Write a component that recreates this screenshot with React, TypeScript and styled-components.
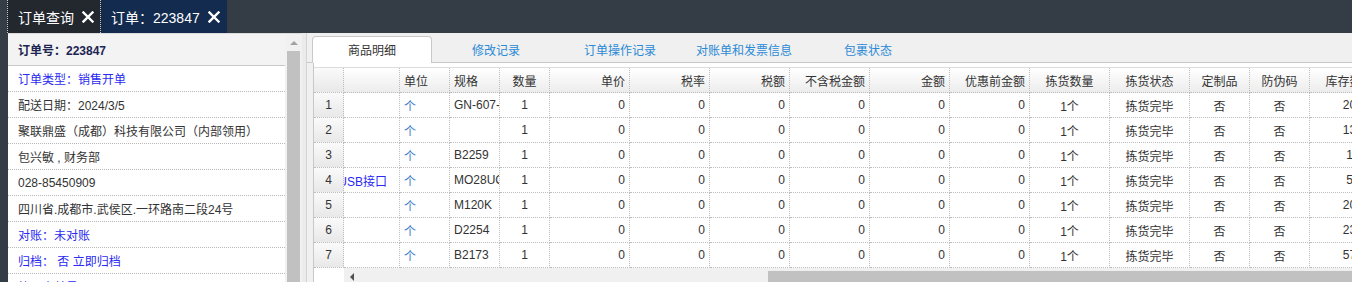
import React from "react";
import styled, { createGlobalStyle } from "styled-components";

const GlobalStyle = createGlobalStyle`
  html, body { margin: 0; padding: 0; }
  body {
    background: #343d46;
    font-family: "Liberation Sans", Arial, "Noto Sans CJK SC", sans-serif;
    font-size: 12px;
    color: #333;
    overflow: hidden;
  }
  * { box-sizing: border-box; }
`;

const Root = styled.div`
  width: 1352px;
  height: 282px;
  display: flex;
  flex-direction: column;
  overflow: hidden;
  background: #343d46;
`;

const TopBar = styled.div`
  height: 33px;
  flex-shrink: 0;
  display: flex;
  padding-left: 7px;
  background: #343d46;
`;

const TopTab = styled.div<{ $bg: string; $dotted?: boolean }>`
  height: 33px;
  display: flex;
  align-items: center;
  gap: 8px;
  padding: 0 7px 0 10px;
  background: ${(p) => p.$bg};
  color: #fff;
  font-size: 14px;
  white-space: nowrap;
  border-left: ${(p) => (p.$dotted ? "1px dotted rgba(255,255,255,0.75)" : "none")};
  border-right: ${(p) => (p.$dotted ? "1px dotted rgba(255,255,255,0.75)" : "none")};
  padding-right: ${(p) => (p.$dotted ? "6px" : "7px")};
`;

const CloseIcon = () => (
  <svg width="12" height="12" viewBox="0 0 12 12">
    <path d="M1.5 1.5 L10.5 10.5 M10.5 1.5 L1.5 10.5" stroke="#fff" strokeWidth="2.4" strokeLinecap="square" />
  </svg>
);

const Main = styled.div`
  flex: 1;
  min-height: 0;
  display: flex;
  padding-left: 8px;
`;

const LeftPanel = styled.div`
  width: 294px;
  flex-shrink: 0;
  display: flex;
  background: #fff;
  border-top: 1px solid #dcdcdc;
`;

const InfoList = styled.div`
  width: 277px;
  display: flex;
  flex-direction: column;
`;

const InfoHeader = styled.div`
  height: 32px;
  flex-shrink: 0;
  display: flex;
  align-items: center;
  padding-left: 10px;
  background: #f3f3f3;
  border-bottom: 1px solid #c8c8c8;
  font-weight: bold;
  color: #1c2452;
`;

const InfoRow = styled.div<{ $blue?: boolean }>`
  height: 26px;
  flex-shrink: 0;
  display: flex;
  align-items: center;
  padding-left: 10px;
  border-bottom: 1px dotted #b8b8b8;
  color: ${(p) => (p.$blue ? "#2a2af2" : "#333")};
  white-space: nowrap;
`;

const VScroll = styled.div`
  width: 17px;
  display: flex;
  flex-direction: column;
  align-items: center;
  background: #f1f1f1;
`;

const UpArrow = styled.div`
  width: 0;
  height: 0;
  margin-top: 7px;
  border-left: 4px solid transparent;
  border-right: 4px solid transparent;
  border-bottom: 4px solid #a3a3a3;
`;

const VThumb = styled.div`
  width: 13px;
  margin-top: 6px;
  flex: 1;
  background: #c1c1c1;
`;

const Splitter = styled.div`
  width: 5px;
  flex-shrink: 0;
  background: #ebebeb;
  border-right: 1px solid #d4d4d4;
`;

const RightPanel = styled.div`
  flex: 1;
  min-width: 0;
  display: flex;
  flex-direction: column;
  background: #f0f0f0;
  overflow: hidden;
`;

const TabStrip = styled.div`
  height: 30px;
  flex-shrink: 0;
  display: flex;
  align-items: flex-start;
  gap: 4px;
  padding: 3px 0 0 5px;
  border-bottom: 1px solid #c8c8c8;
`;

const PaneTab = styled.div<{ $active?: boolean }>`
  width: 120px;
  height: 27px;
  display: flex;
  align-items: center;
  justify-content: center;
  padding-bottom: 1px;
  border: 1px solid ${(p) => (p.$active ? "#c8c8c8" : "transparent")};
  border-bottom: none;
  border-radius: 4px 4px 0 0;
  background: ${(p) => (p.$active ? "#fff" : "transparent")};
  color: ${(p) => (p.$active ? "#333" : "#2b8ad6")};
  position: relative;
  z-index: 1;
`;

const Content = styled.div`
  flex: 1;
  min-height: 0;
  margin-left: 6px;
  padding-top: 4px;
  background: #fff;
  border-left: 1px solid #c8c8c8;
  display: flex;
  flex-direction: column;
  overflow: hidden;
`;

const Grid = styled.div`
  border-top: 1px solid #dcdcdc;
  display: flex;
  flex-direction: column;
`;

const Row = styled.div<{ $head?: boolean }>`
  height: 25px;
  display: flex;
  flex-shrink: 0;
  background: ${(p) => (p.$head ? "linear-gradient(#ffffff, #ececec)" : "#fff")};
`;

type Align = "left" | "center" | "right";

const Cell = styled.div<{ $w: number; $align: Align; $num?: boolean; $color?: string; $pr?: number }>`
  width: ${(p) => p.$w}px;
  flex-shrink: 0;
  height: 25px;
  display: flex;
  align-items: center;
  justify-content: ${(p) =>
    p.$align === "left" ? "flex-start" : p.$align === "right" ? "flex-end" : "center"};
  padding: 0 ${(p) => p.$pr ?? 4}px 0 4px;
  border-right: 1px dotted #bdbdbd;
  border-bottom: 1px dotted #bdbdbd;
  white-space: nowrap;
  overflow: hidden;
  color: ${(p) => p.$color ?? "#333"};
  background: ${(p) => (p.$num ? "linear-gradient(#fafafa, #e8e8e8)" : "transparent")};
`;

const HScroll = styled.div`
  height: 17px;
  flex-shrink: 0;
  display: flex;
`;

const HSpacer = styled.div`
  width: 30px;
  flex-shrink: 0;
  background: #fff;
`;

const HTrack = styled.div`
  flex: 1;
  display: flex;
  align-items: center;
  background: #f0f0f0;
  padding-left: 6px;
`;

const LeftArrow = styled.div`
  width: 0;
  height: 0;
  flex-shrink: 0;
  border-top: 4px solid transparent;
  border-bottom: 4px solid transparent;
  border-right: 4px solid #505050;
`;

const HThumb = styled.div`
  flex: 1;
  align-self: stretch;
  margin: 3px 0 0 414px;
  background: #c1c1c1;
`;

const columns: { w: number; label: string; align: Align }[] = [
  { w: 30, label: "", align: "center" },
  { w: 56, label: "", align: "right" },
  { w: 50, label: "单位", align: "left" },
  { w: 50, label: "规格", align: "left" },
  { w: 50, label: "数量", align: "center" },
  { w: 80, label: "单价", align: "right" },
  { w: 80, label: "税率", align: "right" },
  { w: 80, label: "税额", align: "right" },
  { w: 80, label: "不含税金额", align: "right" },
  { w: 80, label: "金额", align: "right" },
  { w: 80, label: "优惠前金额", align: "right" },
  { w: 80, label: "拣货数量", align: "center" },
  { w: 80, label: "拣货状态", align: "center" },
  { w: 60, label: "定制品", align: "center" },
  { w: 60, label: "防伪码", align: "center" },
  { w: 80, label: "库存数量", align: "center" },
];

const rows = [
  { name: "", spec: "GN-607-B", stock: "20" },
  { name: "", spec: "", stock: "13" },
  { name: "", spec: "B2259", stock: "1" },
  { name: "USB接口", spec: "MO28UC01", stock: "5" },
  { name: "", spec: "M120K", stock: "20" },
  { name: "", spec: "D2254", stock: "23" },
  { name: "", spec: "B2173", stock: "57" },
];

const info: { text: string; blue?: boolean }[] = [
  { text: "订单类型：销售开单", blue: true },
  { text: "配送日期：2024/3/5" },
  { text: "聚联鼎盛（成都）科技有限公司（内部领用）" },
  { text: "包兴敏 , 财务部" },
  { text: "028-85450909" },
  { text: "四川省.成都市.武侯区.一环路南二段24号" },
  { text: "对账：未对账", blue: true },
  { text: "归档： 否 立即归档", blue: true },
  { text: "第三方单号：", blue: true },
];

const tabs = ["商品明细", "修改记录", "订单操作记录", "对账单和发票信息", "包裹状态"];

export default function App() {
  return (
    <>
      <GlobalStyle />
      <Root>
        <TopBar>
          <TopTab $bg="#22282e" $dotted>
            订单查询
            <CloseIcon />
          </TopTab>
          <TopTab $bg="#132b4e">
            订单：223847
            <CloseIcon />
          </TopTab>
        </TopBar>
        <Main>
          <LeftPanel>
            <InfoList>
              <InfoHeader>订单号：223847</InfoHeader>
              {info.map((r, i) => (
                <InfoRow key={i} $blue={r.blue}>
                  {r.text}
                </InfoRow>
              ))}
            </InfoList>
            <VScroll>
              <UpArrow />
              <VThumb />
            </VScroll>
          </LeftPanel>
          <Splitter />
          <RightPanel>
            <TabStrip>
              {tabs.map((t, i) => (
                <PaneTab key={t} $active={i === 0}>
                  {t}
                </PaneTab>
              ))}
            </TabStrip>
            <Content>
              <Grid>
                <Row $head>
                  {columns.map((c, i) => (
                    <Cell key={i} $w={c.w} $align={c.align} $num={i === 0}>
                      {c.label}
                    </Cell>
                  ))}
                </Row>
                {rows.map((r, ri) => {
                  const vals = [
                    String(ri + 1),
                    r.name,
                    "个",
                    r.spec,
                    "1",
                    "0",
                    "0",
                    "0",
                    "0",
                    "0",
                    "0",
                    "1个",
                    "拣货完毕",
                    "否",
                    "否",
                    r.stock,
                  ];
                  return (
                    <Row key={ri}>
                      {vals.map((v, ci) => (
                        <Cell
                          key={ci}
                          $w={columns[ci].w}
                          $align={columns[ci].align}
                          $num={ci === 0}
                          $pr={ci === 1 ? 12 : 4}
                          $color={ci === 1 ? "#2a2af2" : ci === 2 ? "#3d7cc9" : undefined}
                        >
                          {v}
                        </Cell>
                      ))}
                    </Row>
                  );
                })}
              </Grid>
              <HScroll>
                <HSpacer />
                <HTrack>
                  <LeftArrow />
                  <HThumb />
                </HTrack>
              </HScroll>
            </Content>
          </RightPanel>
        </Main>
      </Root>
    </>
  );
}
